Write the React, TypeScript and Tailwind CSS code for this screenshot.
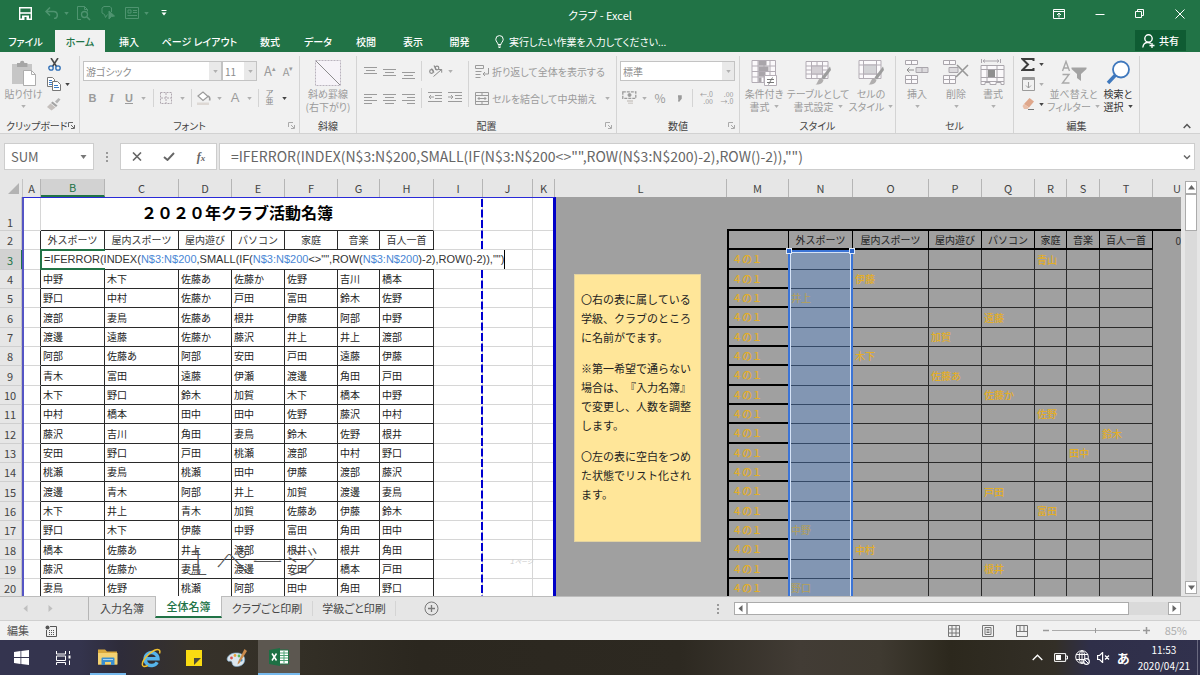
import React from "react";
import type { ReactNode } from "react";

/* ---------- data ---------- */

const CLUBS = ["外スポーツ", "屋内スポーツ", "屋内遊び", "パソコン", "家庭", "音楽", "百人一首"];

const MEMBERS: string[] = [
  "中野 木下 佐藤あ 佐藤か 佐野 吉川 橋本",
  "野口 中村 佐藤か 戸田 富田 鈴木 佐野",
  "渡部 妻鳥 佐藤あ 根井 伊藤 阿部 中野",
  "渡邊 遠藤 佐藤か 藤沢 井上 井上 渡部",
  "阿部 佐藤あ 阿部 安田 戸田 遠藤 伊藤",
  "青木 富田 遠藤 伊瀬 渡邊 角田 戸田",
  "木下 野口 鈴木 加賀 木下 橋本 中野",
  "中村 橋本 田中 田中 佐野 藤沢 中村",
  "藤沢 吉川 角田 妻鳥 鈴木 佐野 根井",
  "安田 野口 戸田 桃瀬 渡部 中村 野口",
  "桃瀬 妻鳥 桃瀬 田中 伊藤 渡部 藤沢",
  "渡邊 青木 阿部 井上 加賀 渡邊 妻鳥",
  "木下 井上 青木 加賀 佐藤あ 伊藤 鈴木",
  "野口 木下 伊藤 中野 富田 角田 田中",
  "橋本 佐藤あ 井上 渡部 根井 根井 角田",
  "藤沢 佐藤か 妻鳥 渡邊 安田 橋本 戸田",
  "妻鳥 佐野 桃瀬 阿部 田中 角田 野口",
];

/* Sheet row -> [club index, student] on the sign-up side. */
const SIGNUPS: Record<number, [number, string]> = {
  3: [4, "青山"],
  4: [1, "伊藤"],
  5: [0, "井上"],
  6: [3, "遠藤"],
  7: [2, "加賀"],
  8: [1, "木下"],
  9: [2, "佐藤あ"],
  10: [3, "佐藤か"],
  11: [4, "佐野"],
  12: [6, "鈴木"],
  13: [5, "田中"],
  15: [3, "戸田"],
  16: [4, "富田"],
  17: [0, "中野"],
  18: [1, "中村"],
  19: [3, "根井"],
  20: [0, "野口"],
};

const COLUMNS: [string, string][] = [
  ["A", "w-[18px]"],
  ["B", "w-[64px]"],
  ["C", "w-[74px]"],
  ["D", "w-[53px]"],
  ["E", "w-[53px]"],
  ["F", "w-[53px]"],
  ["G", "w-[42px]"],
  ["H", "w-[54px]"],
  ["I", "w-[49px]"],
  ["J", "w-[50px]"],
  ["K", "w-[22px]"],
  ["L", "w-[172px]"],
  ["M", "w-[62px]"],
  ["N", "w-[64px]"],
  ["O", "w-[76px]"],
  ["P", "w-[53px]"],
  ["Q", "w-[53px]"],
  ["R", "w-[32px]"],
  ["S", "w-[33px]"],
  ["T", "w-[53px]"],
  ["U", ""],
];

const FORMULA = '=IFERROR(INDEX(N$3:N$200,SMALL(IF(N$3:N$200<>"",ROW(N$3:N$200)-2),ROW()-2)),"")';

/* ---------- small parts ---------- */

function Caret({ dark = false }: { dark?: boolean }) {
  return (
    <svg viewBox="0 0 6 4" className={dark ? "h-[3px] w-[5px] shrink-0 fill-[#444]" : "h-[3px] w-[5px] shrink-0 fill-[#b0b0b0]"} aria-hidden="true">
      <path d="M0 0h6L3 4z" />
    </svg>
  );
}

function Tool({ label, className = "", children }: { label: string; className?: string; children: ReactNode }) {
  return (
    <button type="button" aria-label={label} title={label} className={`flex shrink-0 items-center justify-center ${className}`}>
      {children}
    </button>
  );
}

function Svg({ w, h, children, className = "" }: { w: number; h: number; children: ReactNode; className?: string }) {
  return (
    <svg width={w} height={h} viewBox={`0 0 ${w} ${h}`} fill="none" stroke="currentColor" className={`shrink-0 ${className}`} aria-hidden="true">
      {children}
    </svg>
  );
}

function Rule({ className = "h-5" }: { className?: string }) {
  return <span className={`w-px shrink-0 bg-[#d4d4d4] ${className}`} />;
}

function Group({ label, width, launcher, dark, children }: { label: string; width: string; launcher?: boolean; dark?: boolean; children: ReactNode }) {
  return (
    <section aria-label={label} className={`flex shrink-0 flex-col pt-1 ${width}`}>
      <div className="flex min-h-0 flex-1 border-r border-[#d4d4d4]">{children}</div>
      <div className={`relative flex h-4 items-center border-r border-[#d4d4d4] text-[#444] ${dark ? "pl-[6px]" : "justify-center"}`}>
        {label}
        {launcher && (
          <button type="button" aria-label={`${label}の設定`} className={`absolute right-1 bottom-1 ${dark ? "text-[#666]" : "text-[#aaa]"}`}>
            <Svg w={7} h={7}>
              <path d="M.5 5V.5H5M3 3l3 3M6.5 3v3.500H3" />
            </Svg>
          </button>
        )}
      </div>
    </section>
  );
}

function BigButton({ icon, lines, dark, caretBelow, caretInline, width }: { icon: ReactNode; lines: string[]; dark?: boolean; caretBelow?: boolean; caretInline?: boolean; width: string }) {
  return (
    <button type="button" className={`flex shrink-0 flex-col items-center pt-[2px] ${width} ${dark ? "text-[#333]" : "text-[#9b9b9b]"}`}>
      <span className="flex h-[29px] items-center justify-center">{icon}</span>
      {lines.map((line, i) => (
        <span key={line} className="flex items-center gap-1 leading-[13px] whitespace-nowrap">
          {line}
          {caretInline && i === lines.length - 1 && <Caret dark={dark} />}
        </span>
      ))}
      {caretBelow && (
        <span className="flex h-3 items-center">
          <Caret dark={dark} />
        </span>
      )}
    </button>
  );
}

function Combo({ label, value, width }: { label: string; value: string; width: string }) {
  return (
    <label className={`relative flex h-5 shrink-0 border border-[#c3c3c3] bg-white ${width}`}>
      <select aria-label={label} className="w-full appearance-none bg-transparent pl-[2px] text-[10px] text-[#8c8c8c] outline-none">
        <option>{value}</option>
      </select>
      <span className="pointer-events-none absolute inset-y-0 right-0 flex w-3 items-center justify-center bg-[#e9e9e9]">
        <Caret />
      </span>
    </label>
  );
}

/* ---------- icons ---------- */

const Lines = ({ d }: { d: string }) => (
  <Svg w={13} h={11} className="text-[#9b9b9b]">
    <path d={d} />
  </Svg>
);

const PasteIcon = () => (
  <Svg w={26} h={26}>
    <path d="M1 4h20v20H1z" fill="#c6c6c6" stroke="none" />
    <path d="M6 3h3a2.200 2.200 0 0 1 4.400 0h3v4H6z" fill="#a6a6a6" stroke="none" />
    <path d="M12.500 10.500h8l4 4v11h-12z" fill="#fff" stroke="#adadad" />
    <path d="M20.500 10.500v4h4" stroke="#adadad" />
  </Svg>
);

const CutIcon = () => (
  <Svg w={13} h={13}>
    <path d="M3 0l5.500 8.500M10 0L4.500 8.500" stroke="#4a4a4a" strokeWidth="1.600" />
    <circle cx="3" cy="10" r="2.200" stroke="#2b6cb5" strokeWidth="1.300" />
    <circle cx="10" cy="10" r="2.200" stroke="#2b6cb5" strokeWidth="1.300" />
  </Svg>
);

const CopyIcon = () => (
  <Svg w={14} h={14} className="text-[#777]">
    <path d="M.5.5h5l2 2v7h-7z" fill="#fff" />
    <path d="M2 3.500h3M2 5.500h3M2 7.500h3" stroke="#3b7bc4" />
    <path d="M5.500 4.500h5l3 3v6h-8z" fill="#fff" />
    <path d="M7 8.500h4M7 10.500h5" stroke="#3b7bc4" />
  </Svg>
);

const BrushIcon = () => (
  <Svg w={14} h={13}>
    <path d="M13.500 1.500l-2-1.500-3.500 3.500 2 2z" fill="#b5b5b5" stroke="none" />
    <path d="M5.500 3.500l5 4-1.500 1.500-5-4z" fill="#a3a3a3" stroke="none" />
    <path d="M3.500 5.500l5 4-4 3-4.500-3.500z" fill="#c5c0bd" stroke="none" />
  </Svg>
);

const DiagonalIcon = () => (
  <Svg w={26} h={26}>
    <path d="M.5.5h25v25H.5z" fill="#f6f3f8" stroke="#b9b3bd" strokeDasharray="2 1" />
    <path d="M1 1l24 24" stroke="#8c8c8c" />
  </Svg>
);

const Pen = ({ x }: { x: number }) => (
  <g transform={`translate(${x} 0)`} stroke="none">
    <path d="M15 6.500l-8.500 11 2.500 2L16 10z" fill="#9d9d9d" />
    <path d="M6 18l2.500 2c-1 4-4.500 5-8 4.500 2.500-1 2-5.500 5.500-6.500z" fill="#b0aeae" />
  </g>
);

const ConditionalIcon = () => (
  <Svg w={27} h={26}>
    <path d="M1 .5h23.500v22H1zM1 6h23M1 11.500h23M1 17h23M7 .5v22M13 .5v22M19 .5v22" stroke="#b3adb5" fill="#fbf9fb" />
    <path d="M7.500 1h8v4.500h-8zM7.500 6.500h10v4.500h-10zM7.500 12h7v4.500h-7zM7.500 17.500h3v4.500h-3z" fill="#a9a5aa" stroke="none" />
    <path d="M13.500 15.500h12v10h-12z" fill="#fff" stroke="#b3adb5" />
    <path d="M16 19.500h7M16 22.500h7M21.500 17.500l-4 7" stroke="#777" />
  </Svg>
);

const TableStyleIcon = () => (
  <Svg w={27} h={26}>
    <path d="M1 1.500h22v17H1zM1 6h22M1 10h22M1 14h22M6.500 1.500v17M12 1.500v17M17.500 1.500v17" stroke="#b3adb5" fill="#fbf9fb" />
    <path d="M6.500 6h11v8h-11z" fill="#d3cfd4" stroke="#b3adb5" />
    <Pen x={10} />
  </Svg>
);

const CellStyleIcon = () => (
  <Svg w={27} h={26}>
    <path d="M1 .5h22v18H1zM1 5h22M1 14h22M5.500.5v18M18.500.5v18" stroke="#b3adb5" fill="#fbf9fb" />
    <path d="M5.500 5h13v9h-13z" fill="#d3d3d6" stroke="#b3adb5" />
    <Pen x={10} />
  </Svg>
);

const InsertIcon = () => (
  <Svg w={24} h={25} className="text-[#aaa6ac]">
    <path d="M.5.5h12v4H.5zM6.500.5v4M.5 15.500h12v8H.5zM.5 19.500h12M6.500 15.500v8" fill="#fbf9fb" />
    <path d="M11 7.500h12v5H11zM17 7.500v5" fill="#dcdadd" />
    <path d="M9 10H2M4.500 7.500L2 10l2.500 2.500" stroke="#8c8c8c" />
  </Svg>
);

const DeleteIcon = () => (
  <Svg w={27} h={25} className="text-[#aaa6ac]">
    <path d="M.5.5h12v4H.5zM6.500.5v4M.5 15.500h12v8H.5zM.5 19.500h12M6.500 15.500v8" fill="#fbf9fb" />
    <path d="M6 7.500h9v5H6z" fill="#dcdadd" />
    <path d="M14 5l11 11M25 5L13 17" stroke="#979797" strokeWidth="1.600" />
  </Svg>
);

const FormatIcon = () => (
  <Svg w={26} h={27} className="text-[#aaa6ac]">
    <path d="M1.500 0v4M20.500 0v4M3 2h16M5 .5L3 2l2 1.500M17 .5L19 2l-2 1.500" />
    <path d="M1 6.500h23v16H1zM1 10.500h23M1 18.500h23M7 6.500v16M17 6.500v16M1 22.500v3h4v-2h5v2h6v-2h5v2h3v-3" fill="#fbf9fb" />
    <path d="M8 11h7v7H8z" fill="#8f8f8f" stroke="none" />
  </Svg>
);

const SortIcon = () => (
  <Svg w={26} h={26}>
    <path d="M1.500 11L5 1.500 8.500 11M2.700 8h4.600M1.500 14.500h6.500l-6.500 8.500h7" stroke="#a9a9a9" strokeWidth="1.400" />
    <path d="M10.500 7.500h15v1.500L20 14v7l-4-3v-4l-5.500-5z" fill="#a3a3a3" stroke="none" />
  </Svg>
);

const FindIcon = () => (
  <Svg w={25} h={26}>
    <path d="M10 14.500L2 23" stroke="#3f78bd" strokeWidth="3.500" />
    <circle cx="15" cy="9.500" r="8" stroke="#3f78bd" strokeWidth="1.800" fill="#fff" />
  </Svg>
);

/* ---------- application chrome ---------- */

function TitleBar() {
  return (
    <div className="grid h-[30px] grid-cols-[1fr_auto_1fr] items-center">
      <div className="flex items-center pb-1 pl-[19px]">
        <Tool label="上書き保存" className="w-[13px] text-white">
          <Svg w={13} h={13}>
            <path d="M.7.7h11.600v11.600H.7z" strokeWidth="1.400" />
            <path d="M1 6h11" strokeWidth="1.600" />
            <path d="M3 8.500h7V13H3z" fill="currentColor" stroke="none" />
            <path d="M5.500 10h2v3h-2z" fill="#217346" stroke="none" />
          </Svg>
        </Tool>
        <Tool label="元に戻す" className="ml-[13px] gap-[5px] text-[#4f9470]">
          <Svg w={14} h={12}>
            <path d="M5 .5L1 4.500l4 4M1 4.500h7.500c5 0 5 7 .5 7" strokeWidth="1.500" />
          </Svg>
          <svg viewBox="0 0 6 4" className="h-[3px] w-[5px] fill-[#4f9470]"><path d="M0 0h6L3 4z" /></svg>
        </Tool>
        <Tool label="印刷プレビュー" className="ml-2 text-[#4f9470]">
          <Svg w={14} h={15}>
            <path d="M4 13.500H.5V.5h7l3 3v2M7.500.5v3h3" />
            <circle cx="7.500" cy="8.500" r="3" strokeWidth="1.300" />
            <path d="M10 11l3 3" strokeWidth="1.600" />
          </Svg>
        </Tool>
        <Tool label="図形" className="ml-[10px] text-[#4f9470]">
          <Svg w={14} h={14}>
            <path d="M3.500 8.500L1 7V2l2-1.500h6L10.500 2v4M3.500 8.500l1 3 2-3" />
            <path d="M8 5l5.500 5-3 .5L8 13z" fill="currentColor" />
          </Svg>
        </Tool>
        <Tool label="フォーム" className="ml-[10px] gap-[5px] text-[#4f9470]">
          <Svg w={14} h={12}>
            <path d="M.5.5h13v11H.5zM3 3h3v3H3zM8 3.500h4M8 5.500h4M2.500 8.500H12" />
          </Svg>
          <svg viewBox="0 0 6 4" className="h-[3px] w-[5px] fill-[#4f9470]"><path d="M0 0h6L3 4z" /></svg>
        </Tool>
        <Tool label="クイック アクセス ツール バーのユーザー設定" className="ml-3 text-white">
          <Svg w={6} h={6}>
            <path d="M.5.5h5" />
            <path d="M.5 2.500h5L3 5.500z" fill="currentColor" stroke="none" />
          </Svg>
        </Tool>
      </div>
      <h1 className="text-[11px] text-white">クラブ - Excel</h1>
      <div className="flex items-center justify-end gap-[30px] pr-[15px] pb-[3px] text-white">
        <Tool label="リボンの表示オプション">
          <Svg w={12} h={10}>
            <path d="M.5.5h11v9H.5zM.5 2.500h11M6 8.500V4M4 6l2-2 2 2" />
          </Svg>
        </Tool>
        <Tool label="最小化">
          <Svg w={10} h={10}>
            <path d="M.5 5.500h9" />
          </Svg>
        </Tool>
        <Tool label="元のサイズに戻す">
          <Svg w={10} h={10}>
            <path d="M.5 2.500h6v6h-6zM2.500 2.500v-2h6v6h-2" />
          </Svg>
        </Tool>
        <Tool label="閉じる">
          <Svg w={10} h={10}>
            <path d="M.5.5l9 9M9.500.5l-9 9" />
          </Svg>
        </Tool>
      </div>
    </div>
  );
}

const TABS: [string, string][] = [
  ["挿入", "w-[48px]"],
  ["ページ レイアウト", "w-[93px]"],
  ["数式", "w-[48px]"],
  ["データ", "w-[48px]"],
  ["校閲", "w-[48px]"],
  ["表示", "w-[46px]"],
  ["開発", "w-[47px]"],
];

function RibbonTabs() {
  return (
    <nav className="flex h-[22px] items-stretch text-[10px] font-medium whitespace-nowrap text-white">
      <button type="button" className="w-[55px] pr-1">ファイル</button>
      <button type="button" className="w-[50px] bg-[#f1f1f1] text-[#217346]">ホーム</button>
      {TABS.map(([name, width]) => (
        <button key={name} type="button" className={width}>{name}</button>
      ))}
      <label className="ml-3 flex items-center gap-[5px]">
        <Svg w={9} h={13}>
          <path d="M3 9.500C3 7.500.8 6.800.8 4.300a3.700 3.700 0 0 1 7.400 0C8.200 6.800 6 7.500 6 9.500zM3 11h3M3.500 12.500h2" />
        </Svg>
        <input aria-label="操作アシスト" placeholder="実行したい作業を入力してください..." className="w-44 bg-transparent text-[10px] font-normal text-white outline-none placeholder:text-white" />
      </label>
      <button type="button" className="mr-[14px] mb-px ml-auto flex w-[51px] items-center justify-center gap-1 bg-[#0f5c33]">
        <Svg w={13} h={14}>
          <circle cx="6.500" cy="4.500" r="3.700" strokeWidth="1.400" />
          <path d="M.8 13.500c.4-3.500 2.500-5 5-5 1.500 0 2.500.5 3 1.200M7.500 11.500h5M10 9v5" strokeWidth="1.300" />
        </Svg>
        共有
      </button>
    </nav>
  );
}

function Ribbon() {
  return (
    <div className="flex h-[82px] shrink-0 border-b border-[#d2d2d2] bg-[#f1f1f1] text-[10px] text-[#9b9b9b]">
      <Group label="クリップボード" width="w-[80px]" launcher dark>
        <BigButton icon={<PasteIcon />} lines={["貼り付け"]} caretBelow width="w-[47px]" />
        <div className="flex flex-col gap-[6px] pt-px">
          <Tool label="切り取り" className="h-[14px] w-[14px]"><CutIcon /></Tool>
          <Tool label="コピー" className="h-[14px] gap-1"><CopyIcon /><Caret dark /></Tool>
          <Tool label="書式のコピー/貼り付け" className="h-[14px] w-[14px]"><BrushIcon /></Tool>
        </div>
      </Group>

      <Group label="フォント" width="w-[220px]" launcher>
        <div className="flex flex-col gap-2 pt-[5px] pl-[3px]">
          <div className="flex items-center">
            <Combo label="フォント名" value="游ゴシック" width="w-[139px]" />
            <Combo label="フォント サイズ" value="11" width="w-[35px]" />
            <Tool label="フォント サイズの拡大" className="ml-1 w-[18px] text-[13px]">A<sup className="text-[7px]">▴</sup></Tool>
            <Tool label="フォント サイズの縮小" className="w-[18px] text-[11px]">A<sup className="text-[7px]">▾</sup></Tool>
          </div>
          <div className="flex h-[18px] items-center font-['Liberation_Sans','Noto_Sans_CJK_JP',sans-serif]">
            <Tool label="太字" className="w-[19px] text-[11px] font-bold">B</Tool>
            <Tool label="斜体" className="w-[19px] font-['Liberation_Serif',serif] text-[12px] font-bold italic">I</Tool>
            <Tool label="下線" className="w-[28px] justify-start gap-2 pl-1 text-[11px] font-bold"><span className="underline">U</span><Caret /></Tool>
            <Rule className="ml-1 h-[18px]" />
            <Tool label="罫線" className="w-[37px] gap-2">
              <Svg w={12} h={12}>
                <path d="M.5.5h11v11H.5zM6 1v10M1 6h10" stroke="#b0a8b0" strokeDasharray="2 1" />
              </Svg>
              <Caret />
            </Tool>
            <Rule className="h-[18px]" />
            <Tool label="塗りつぶしの色" className="w-[34px] gap-[6px]">
              <Svg w={15} h={14}>
                <path d="M2 5l5-4 5 4.500-5 4z" fill="#fff" strokeWidth="1.200" />
                <path d="M12 5c2 1 2 3 1.500 4.500" strokeWidth="1.600" />
                <path d="M1 11.500h12V14H1z" fill="#ddd8d4" stroke="none" />
              </Svg>
              <Caret />
            </Tool>
            <Tool label="フォントの色" className="w-[31px] gap-2 text-[13px]">A<Caret /></Tool>
            <Rule className="ml-px h-[18px]" />
            <Tool label="ふりがなの表示/非表示" className="w-[34px] gap-2">
              <span className="flex flex-col text-center text-[8px] leading-[8px] text-[#888]"><span>ア</span><span>亜</span></span>
              <Caret dark />
            </Tool>
          </div>
        </div>
      </Group>

      <Group label="斜線" width="w-[57px]">
        <BigButton icon={<DiagonalIcon />} lines={["斜め罫線", "(右下がり)"]} width="w-[56px]" />
      </Group>

      <Group label="配置" width="w-[260px]" launcher>
        <div className="flex pt-[5px] pl-[7px]">
          <div className="flex flex-col gap-2">
            <div className="flex h-5 items-center gap-[6px]">
              <Tool label="上揃え"><Lines d="M0 1.500h13M2 4.500h9M0 7.500h13" /></Tool>
              <Tool label="上下中央揃え"><Lines d="M0 3.500h13M2 6.500h9M0 9.500h13" /></Tool>
              <Tool label="下揃え" className="pt-1"><Lines d="M0 4.500h13M2 7.500h9M0 10.500h13" /></Tool>
              <Rule />
              <Tool label="方向" className="gap-[5px]">
                <Svg w={15} h={14} className="text-[#8c8c8c]">
                  <circle cx="3.500" cy="7.500" r="1.800" strokeWidth="1.200" />
                  <path d="M3.500 4.500L6 8.500M6 1.500l2.500 4.500" strokeWidth="1.200" />
                  <circle cx="9" cy="4" r="1.800" strokeWidth="1.200" />
                  <path d="M5.500 12.500l8-7M10.500 5.500h3.200v3.200" />
                </Svg>
                <Caret />
              </Tool>
            </div>
            <div className="flex h-[18px] items-center gap-[6px]">
              <Tool label="左揃え"><Lines d="M0 1.500h13M0 4.500h8M0 7.500h13M0 10.500h8" /></Tool>
              <Tool label="中央揃え"><Lines d="M0 1.500h13M2 4.500h9M0 7.500h13M2 10.500h9" /></Tool>
              <Tool label="右揃え"><Lines d="M0 1.500h13M5 4.500h8M0 7.500h13M5 10.500h8" /></Tool>
              <Rule />
              <Tool label="インデントを減らす">
                <Svg w={14} h={12}><path d="M0 .5h14M7 3.500h7M7 6.500h7M0 9.500h14M6 5H1M3 3L1 5l2 2" /></Svg>
              </Tool>
              <Tool label="インデントを増やす">
                <Svg w={14} h={12}><path d="M0 .5h14M7 3.500h7M7 6.500h7M0 9.500h14M0 5h5M3 3l2 2-2 2" /></Svg>
              </Tool>
            </div>
          </div>
          <Rule className="ml-[6px] h-[46px]" />
          <div className="flex flex-col gap-2 pl-[6px]">
            <button type="button" className="flex h-5 items-center gap-[3px] whitespace-nowrap">
              <Svg w={14} h={13}><path d="M.5.5h8v3h-8zM.5 6.500h6M.5 9.500h5M.5 12.500h5M13.500 3v6H8M10 7L8 9l2 2" /></Svg>
              折り返して全体を表示する
            </button>
            <button type="button" className="flex h-[18px] items-center gap-[3px] whitespace-nowrap">
              <Svg w={14} h={13}><path d="M.5.5h13v12H.5zM.5 3.500h13M.5 9.500h13M7 .5v3M7 9.500v3M3 6.500h8M4.500 5L3 6.500 4.500 8M9.500 5L11 6.500 9.500 8" /></Svg>
              セルを結合して中央揃え
              <span className="pl-[5px]"><Caret /></span>
            </button>
          </div>
        </div>
      </Group>

      <Group label="数値" width="w-[123px]" launcher>
        <div className="flex flex-col gap-2 pt-[5px] pl-[3px]">
          <Combo label="表示形式" value="標準" width="w-[115px]" />
          <div className="flex h-[18px] items-center">
            <Tool label="通貨表示形式" className="w-[28px] gap-[5px]">
              <Svg w={15} h={14}>
                <path d="M.8.8h13v6.500H.8z" strokeDasharray="3 1" strokeWidth="1.300" />
                <circle cx="7.500" cy="4" r="1.500" fill="currentColor" />
                <path d="M5 9h6v2H5zM6 11.500h5V13H6z" fill="#d5d2cf" stroke="none" />
              </Svg>
              <Caret />
            </Tool>
            <Tool label="パーセント スタイル" className="w-[24px] text-[12px]">%</Tool>
            <Tool label="桁区切りスタイル" className="w-[15px] text-[14px] font-bold">
              <Svg w={5} h={7}><path d="M1 1h3v2.500L1.500 6.500" strokeWidth="1.500" fill="currentColor" /></Svg>
            </Tool>
            <Rule className="ml-[5px] h-[18px]" />
            <Tool label="小数点以下の表示桁数を増やす" className="w-[27px]">
              <span className="flex flex-col text-right text-[7px] leading-[7px]"><span>←.0</span><span>.00</span></span>
            </Tool>
            <Tool label="小数点以下の表示桁数を減らす" className="w-[14px]">
              <span className="flex flex-col text-right text-[7px] leading-[7px]"><span>.00</span><span>→.0</span></span>
            </Tool>
          </div>
        </div>
      </Group>

      <Group label="スタイル" width="w-[156px]">
        <BigButton icon={<ConditionalIcon />} lines={["条件付き", "書式"]} caretInline width="w-[48px]" />
        <BigButton icon={<TableStyleIcon />} lines={["テーブルとして", "書式設定"]} caretInline width="w-[60px]" />
        <BigButton icon={<CellStyleIcon />} lines={["セルの", "スタイル"]} caretInline width="w-[46px]" />
      </Group>

      <Group label="セル" width="w-[118px]">
        <BigButton icon={<InsertIcon />} lines={["挿入"]} caretBelow width="w-[42px]" />
        <BigButton icon={<DeleteIcon />} lines={["削除"]} caretBelow width="w-[36px]" />
        <BigButton icon={<FormatIcon />} lines={["書式"]} caretBelow width="w-[38px]" />
      </Group>

      <Group label="編集" width="w-[126px]">
        <div className="flex flex-col gap-[6px] pt-px pl-[7px]">
          <Tool label="オート SUM" className="h-[14px] gap-1">
            <Svg w={14} h={13}>
              <path d="M12.500 3V1H1.500l5.500 5.500L1.500 12h11v-2" stroke="#3d3d3d" strokeWidth="2" />
            </Svg>
            <Caret dark />
          </Tool>
          <Tool label="フィル" className="h-[14px] gap-1">
            <Svg w={13} h={14}>
              <path d="M.5.5h12v13H.5z" />
              <path d="M.5 1.500h12M.5 2.500h12M6.500 5v6M4 8.500l2.500 2.500L9 8.500" />
            </Svg>
            <Caret />
          </Tool>
          <Tool label="クリア" className="h-[14px] gap-1">
            <Svg w={13} h={12}>
              <path d="M7.500 0l4.500 3.500-5 6L2 6z" fill="#dfa78b" stroke="none" />
              <path d="M2 6l5 3.500-1.500 1.500H2L.5 8z" fill="#e9bfa9" stroke="none" />
              <path d="M6 11.500h6" stroke="#777" />
            </Svg>
            <Caret dark />
          </Tool>
        </div>
        <BigButton icon={<SortIcon />} lines={["並べ替えと", "フィルター"]} caretInline width="w-[59px]" />
        <BigButton icon={<FindIcon />} lines={["検索と", "選択"]} caretInline dark width="w-[30px]" />
      </Group>

      <button type="button" aria-label="リボンを折りたたむ" className="mr-[9px] mb-1 ml-auto self-end text-[#555]">
        <Svg w={8} h={6}><path d="M.7 5L4 1.500 7.300 5" strokeWidth="1.500" /></Svg>
      </button>
    </div>
  );
}

function FormulaBar() {
  return (
    <div className="flex h-[45px] shrink-0 items-start bg-[#e6e6e6] pt-[9px] pr-[5px] pl-1 text-[#666]">
      <label className="flex h-[27px] w-[90px] items-center border border-[#cdcdcd] bg-white pr-[6px] pl-[6px]">
        <input aria-label="名前ボックス" defaultValue="SUM" className="w-0 flex-1 bg-transparent text-[13px] outline-none" />
        <svg viewBox="0 0 6 4" className="h-1 w-[7px] fill-[#777]"><path d="M0 0h6L3 4z" /></svg>
      </label>
      <span className="flex h-[27px] w-[26px] items-center justify-center text-[#999]">
        <Svg w={2} h={10}><path d="M1 0v2M1 4v2M1 8v2" strokeWidth="2" /></Svg>
      </span>
      <div className="flex h-[27px] w-[97px] items-center justify-around border border-[#cdcdcd] bg-white">
        <Tool label="キャンセル"><Svg w={10} h={9}><path d="M1 .5l8 8M9 .5l-8 8" strokeWidth="1.600" /></Svg></Tool>
        <Tool label="入力"><Svg w={12} h={9}><path d="M1 5l3.500 3L11 1" strokeWidth="1.900" /></Svg></Tool>
        <Tool label="関数の挿入"><span className="font-['Liberation_Serif',serif] text-[12px] font-bold italic">f<span className="text-[9px]">x</span></span></Tool>
      </div>
      <label className="ml-[2px] flex h-[27px] flex-1 items-center border border-[#cdcdcd] bg-white pr-[3px] pl-[11px]">
        <input aria-label="数式バー" defaultValue={FORMULA} className="w-0 flex-1 bg-transparent text-[14px] outline-none" />
        <Svg w={8} h={6}><path d="M1 1.500L4 4.500l3-3" strokeWidth="1.500" /></Svg>
      </label>
    </div>
  );
}

/* ---------- worksheet ---------- */

const THIN = "border-r border-b border-[#2a2a2a]";
const FAINT = "border-r border-b border-[#d6d6d6] bg-white";

function rowHeight(row: number) {
  if (row === 1) return "h-[34px]";
  return row % 3 === 0 ? "h-5" : "h-[19px]";
}

function RowHeader({ row }: { row: number }) {
  const active = row === 3;
  return (
    <th
      scope="row"
      className={`border-r-2 border-b border-b-[#cfcfcf] p-0 pr-px text-center text-[11px] leading-4 font-normal ${
        row === 1 ? "align-bottom" : ""
      } ${active ? "border-r-[#217346] bg-[#d2d2d2] text-[#217346]" : "border-r-[#c4c4c4] bg-[#e6e6e6] text-[#444]"}`}
    >
      {row}
    </th>
  );
}

function CellEditor() {
  return (
    <div className="absolute top-0 left-0 z-10 flex h-[19px] items-center border-r border-black bg-white pl-[3px] font-['Liberation_Sans','Noto_Sans_CJK_JP',sans-serif] text-[11px] leading-none whitespace-nowrap text-[#333]">
      <span>
        =IFERROR(INDEX(<span className="text-[#4a86d4]">N$3:N$200</span>,SMALL(IF(<span className="text-[#4a86d4]">N$3:N$200</span>
        &lt;&gt;"",ROW(<span className="text-[#4a86d4]">N$3:N$200</span>)-2),ROW()-2)),"")
      </span>
      <span className="absolute -top-px -left-px h-[21px] w-[65px] border-2 border-r-0 border-[#217346]" />
    </div>
  );
}

function LeftCells({ row }: { row: number }) {
  if (row === 1) {
    return (
      <td colSpan={7} className="border-r border-b border-r-[#d6d6d6] border-b-[#2a2a2a] bg-white p-0 pb-[3px] text-center text-[16px] leading-5 font-bold text-black">
        ２０２０年クラブ活動名簿
      </td>
    );
  }
  if (row === 2) {
    return (
      <>
        {CLUBS.map((club) => (
          <td key={club} className={`${THIN} bg-white p-0 text-center leading-4 text-[#333]`}>{club}</td>
        ))}
      </>
    );
  }
  if (row === 3) {
    return (
      <>
        {CLUBS.map((club, i) => (
          <td key={club} className={`${THIN} relative bg-white p-0 leading-4`}>{i === 0 && <CellEditor />}</td>
        ))}
      </>
    );
  }
  return (
    <>
      {MEMBERS[row - 4].split(" ").map((name, i) => (
        <td key={CLUBS[i]} className={`${THIN} bg-white p-0 pl-[2px] leading-4 text-[#222]`}>{name}</td>
      ))}
    </>
  );
}

function RightCells({ row }: { row: number }) {
  if (row === 1) {
    return (
      <>
        <td colSpan={8} className="border-b-2 border-black p-0" />
        <td className="border-b-2 border-black p-0" />
      </>
    );
  }
  const entry = SIGNUPS[row];
  return (
    <>
      <td className="border-r border-b-2 border-l-2 border-black p-0 pl-[3px] leading-4 font-medium text-[#e3ae28]">{row > 2 && "４の１"}</td>
      {CLUBS.map((club, i) => (
        <td
          key={club}
          className={
            row === 2
              ? "border-r border-b-2 border-black p-0 text-center leading-4 text-[#222]"
              : `${THIN} p-0 pl-[2px] leading-4 font-medium text-[#e3ae28]`
          }
        >
          {row === 2 ? club : entry && entry[0] === i ? entry[1] : null}
        </td>
      ))}
      <td className="p-0 text-right leading-4 text-[#333]">{row === 2 && "0"}</td>
    </>
  );
}

function Note() {
  return (
    <aside className="absolute top-[95px] left-[574px] flex h-[268px] w-[127px] flex-col gap-3 border border-[#e3d3a0] bg-[#ffe699] px-[6px] pt-[15px] text-[11px] leading-[19px] text-[#222] [text-spacing-trim:space-all]">
      <p>〇右の表に属している<br />学級、クラブのところ<br />に名前がでます。</p>
      <p>※第一希望で通らない<br />場合は、『入力名簿』<br />で変更し、人数を調整<br />します。</p>
      <p>〇左の表に空白をつめ<br />た状態でリスト化され<br />ます。</p>
    </aside>
  );
}

function Worksheet() {
  const rows = Array.from({ length: 20 }, (_, i) => i + 1);
  return (
    <div className="relative min-w-0 flex-1 overflow-hidden bg-[#a0a0a0]">
      <table className="w-full table-fixed border-separate border-spacing-0 text-[10px] whitespace-nowrap">
        <colgroup>
          <col className="w-[23px]" />
          {COLUMNS.map(([name, width]) => (
            <col key={name} className={width} />
          ))}
        </colgroup>
        <thead>
          <tr className="h-[18px] bg-[#e6e6e6] text-[11px] text-[#444]">
            <th className="border-r border-[#c4c4c4] p-0">
              <svg viewBox="0 0 11 11" className="ml-auto h-[11px] w-[14px] pr-[3px]" aria-label="すべて選択"><path d="M11 0v11H0z" fill="#b3b3b3" /></svg>
            </th>
            {COLUMNS.map(([name]) => (
              <th
                key={name}
                scope="col"
                className={
                  name === "B"
                    ? "border-r border-b-2 border-r-[#b5b5b5] border-b-[#217346] bg-[#d2d2d2] p-0 leading-4 font-normal text-[#217346]"
                    : name === "U"
                      ? "p-0 text-right leading-4 font-normal"
                      : "border-r border-[#b5b5b5] p-0 leading-4 font-normal"
                }
              >
                {name}
              </th>
            ))}
          </tr>
        </thead>
        <tbody>
          {rows.map((row) => (
            <tr key={row} className={rowHeight(row)}>
              <RowHeader row={row} />
              <td className={`border-b border-b-[#d6d6d6] bg-white p-0 ${row === 1 ? "border-r border-r-[#d6d6d6]" : "border-r border-r-[#2a2a2a]"}`} />
              <LeftCells row={row} />
              <td className={FAINT} />
              <td className={FAINT} />
              <td className={FAINT} />
              <td className="p-0" />
              <RightCells row={row} />
            </tr>
          ))}
        </tbody>
      </table>

      {/* print area, page break and page watermark */}
      <div className="pointer-events-none absolute top-[18px] left-[22px] h-[600px] w-[534px] border-t border-r-[3px] border-l-2 border-t-[#2a2ad8] border-r-[#0000c8] border-l-[#5555c4]" />
      <svg className="pointer-events-none absolute top-5 left-[481px] h-[600px] w-[2px]" aria-hidden="true">
        <path d="M1 0v52M1 71v529" stroke="#0000d0" strokeWidth="2" strokeDasharray="8 2.500" />
      </svg>
      <p className="pointer-events-none absolute top-[356px] left-[180px] text-[35px] leading-[50px] font-thin text-[#555]">１ページ</p>
      <p className="pointer-events-none absolute top-[379px] left-[509px] text-[6px] leading-[8px] text-[#c8c8c8] italic">１ページ</p>

      {/* range referenced by the formula */}
      <div className="pointer-events-none absolute top-[71px] left-[788px] h-[600px] w-[65px] border-2 border-[#3b74d6] bg-[#4a84d8]/35 shadow-[inset_0_0_0_1px_#d5e2f5]">
        <span className="absolute -top-1 -left-1 size-[6px] border border-[#dfe9f7] bg-[#2f68cc]" />
        <span className="absolute -top-1 -right-1 size-[6px] border border-[#dfe9f7] bg-[#2f68cc]" />
      </div>
      <Note />
    </div>
  );
}

function Arrow({ dir }: { dir: "up" | "down" | "left" | "right" }) {
  const d = { up: "M0 5.500L3.500 1 7 5.500z", down: "M0 1.500L3.500 6 7 1.500z", left: "M5.500 0L1.500 3.500 5.500 7z", right: "M1.500 0L5.500 3.500 1.500 7z" }[dir];
  return (
    <svg viewBox="0 0 7 7" className="size-[7px] fill-[#666]" aria-hidden="true">
      <path d={d} />
    </svg>
  );
}

function VerticalScroll() {
  return (
    <div className="flex w-[19px] shrink-0 flex-col bg-[#e6e6e6] pt-[2px] pr-[3px] pb-[2px] pl-[4px]">
      <Tool label="上へスクロール" className="h-[13px] w-full border border-[#ababab] bg-white"><Arrow dir="up" /></Tool>
      <div className="flex-1 bg-[#dadada]"><div className="h-[37px] border border-[#ababab] bg-white" /></div>
      <Tool label="下へスクロール" className="h-[13px] w-full border border-[#ababab] bg-white"><Arrow dir="down" /></Tool>
    </div>
  );
}

function SheetTabs() {
  return (
    <div className="flex h-[24px] shrink-0 items-stretch border-t border-[#bcbcbc] bg-[#e6e6e6] text-[11px] whitespace-nowrap text-[#444]">
      <div className="flex w-[89px] items-center gap-[18px] border-r border-[#b0b0b0] pl-[22px] opacity-90">
        <Tool label="前のシート"><svg viewBox="0 0 7 7" className="size-[7px] fill-[#bbb]"><path d="M5.500 0L1.500 3.500 5.500 7z" /></svg></Tool>
        <Tool label="次のシート"><svg viewBox="0 0 7 7" className="size-[7px] fill-[#bbb]"><path d="M1.500 0L5.500 3.500 1.500 7z" /></svg></Tool>
      </div>
      <button type="button" className="w-[66px]">入力名簿</button>
      <button type="button" className="-mt-px mb-[2px] w-[67px] border-x border-b-2 border-x-[#bcbcbc] border-b-[#217346] bg-white font-medium text-[#217346]">全体名簿</button>
      <button type="button" className="w-[90px]">クラブごと印刷</button>
      <Rule className="my-1 bg-[#b0b0b0]" />
      <button type="button" className="w-[82px]">学級ごと印刷</button>
      <Rule className="my-1 bg-[#b0b0b0]" />
      <Tool label="新しいシート" className="ml-[28px] text-[#777]">
        <Svg w={15} h={15}><circle cx="7.500" cy="7.500" r="6.500" /><path d="M4 7.500h7M7.500 4v7" strokeWidth="1.300" /></Svg>
      </Tool>
      <div className="mr-[19px] ml-auto flex w-[464px] items-center">
        <span className="w-[17px] text-[#999]"><Svg w={2} h={10}><path d="M1 0v2M1 4v2M1 8v2" strokeWidth="2" /></Svg></span>
        <Tool label="左へスクロール" className="h-[13px] w-[13px] border border-[#ababab] bg-white"><Arrow dir="left" /></Tool>
        <div className="flex h-[13px] flex-1 bg-[#dadada]"><div className="w-[382px] border border-[#ababab] bg-white" /></div>
        <Tool label="右へスクロール" className="h-[13px] w-[13px] border border-[#ababab] bg-white"><Arrow dir="right" /></Tool>
      </div>
    </div>
  );
}

function StatusBar() {
  return (
    <div className="flex h-5 shrink-0 items-center border-t border-[#d0d0d0] bg-[#f1f1f1] pr-[13px] pl-[7px] text-[11px] text-[#555]">
      <span>編集</span>
      <Tool label="マクロの記録" className="ml-4">
        <Svg w={12} h={12}>
          <path d="M5 1.500h6.500v10H1.500V5" />
          <circle cx="2.500" cy="2.500" r="2" fill="currentColor" stroke="none" />
          <path d="M4 5.500h6M4 7.500h6M4 9.500h6" strokeDasharray="1 1" />
        </Svg>
      </Tool>
      <div className="ml-auto flex items-center gap-[22px] text-[#777]">
        <Tool label="標準"><Svg w={12} h={12}><path d="M.5.5h11v11H.5zM.5 4h11M.5 8h11M4 .5v11M8 .5v11" /></Svg></Tool>
        <Tool label="ページ レイアウト表示"><Svg w={12} h={12}><path d="M.5.5h11v11H.5zM3 2.500h6v7H3zM4.500 4.500h3M4.500 6h3M4.500 7.500h3" /></Svg></Tool>
        <Tool label="改ページ プレビュー"><Svg w={12} h={12}><path d="M.5.5h11v11H.5zM.5 6.500h11M4 .5v6M8 .5v6" /></Svg></Tool>
      </div>
      <Tool label="縮小" className="ml-[15px] text-[#999]"><Svg w={6} h={7}><path d="M0 3.500h6" strokeWidth="1.500" /></Svg></Tool>
      <input
        type="range"
        aria-label="ズーム"
        defaultValue={50}
        className="mx-[3px] h-px w-[88px] appearance-none bg-[#ababab] [&::-webkit-slider-thumb]:h-[5px] [&::-webkit-slider-thumb]:w-px [&::-webkit-slider-thumb]:appearance-none [&::-webkit-slider-thumb]:bg-[#999]"
      />
      <Tool label="拡大" className="text-[#999]"><Svg w={7} h={7}><path d="M0 3.500h7M3.500 0v7" strokeWidth="1.500" /></Svg></Tool>
      <span className="ml-[15px] text-[#b0b0b0]">85%</span>
    </div>
  );
}

/* ---------- desktop taskbar ---------- */

function Taskbar() {
  return (
    <footer className="flex h-[35px] shrink-0 items-stretch bg-[linear-gradient(90deg,#34344f_0,#34344d_80px,#2e2c3a_120px,#37322a_190px,#332f26_300px,#2b271f_420px,#2d2921_680px,#423c35_800px,#3f3a31_880px,#2c281d_950px,#332f27_1055px,#2f2f49_1090px,#31314d_100%)] text-white">
      <Tool label="スタート" className="w-[42px]">
        <svg viewBox="0 0 15 15" className="size-[15px] fill-white"><path d="M0 2l6.500-1v6H0zM7.300.9L15 0v7H7.300zM0 8h6.500v6L0 13zM7.300 8H15v7l-7.700-.9z" /></svg>
      </Tool>
      <Tool label="タスク ビュー" className="w-[42px]">
        <Svg w={15} h={14}><path d="M.5 0v3h9V0M.5 5h9v4.500h-9zM.5 14v-2.500h9V14M13.500 0v3M13.500 9.500V14" /><path d="M12.500 4.500h2v3h-2z" fill="currentColor" stroke="none" /></Svg>
      </Tool>
      <Tool label="エクスプローラー" className="mx-[6px] w-9 border-b-2 border-[#76b9ed]">
        <svg viewBox="0 0 20 17" className="h-[17px] w-5">
          <path d="M0 1.500h7l2 2h10v13H0z" fill="#d9a93d" />
          <path d="M0 5h19.500v11.500H0z" fill="#f4d272" />
          <path d="M3.500 17V10.500q0-1 1-1h11q1 0 1 1V17h-3.500v-3h-6v3z" fill="#3b8fd0" />
          <path d="M5 11.500h10" stroke="#a8d5f2" />
        </svg>
      </Tool>
      <Tool label="Internet Explorer" className="-ml-1 w-[46px]">
        <svg viewBox="0 0 20 20" className="size-5" fill="none">
          <path d="M16.200 14.200A6.500 6.500 0 1 1 17 10.800H5" stroke="#56b4ea" strokeWidth="3.400" />
          <path d="M18.500 5.500C19.800 2 17.500.3 13.500 2.200 7.500 5 1.500 12 1.300 16.200c0 3 2.500 2.800 5.500 1.300" stroke="#f2c230" strokeWidth="1.500" />
        </svg>
      </Tool>
      <Tool label="付箋" className="w-10">
        <svg viewBox="0 0 16 16" className="size-4"><path d="M0 0h16v16H0z" fill="#fadc12" /><path d="M8 8h7l-7 7z" fill="#4b4a3a" /></svg>
      </Tool>
      <Tool label="ペイント" className="ml-[3px] w-10">
        <svg viewBox="0 0 22 20" className="h-5 w-[22px]">
          <path d="M9 5C3 5.500 0 10 1.500 12.500c1 1.700 3 0 4 1s0 5 5 5c6 0 9-4 8-8.500C17.500 6.500 14 4.500 9 5z" fill="#dbe6ee" stroke="#7da6c4" strokeWidth=".7" />
          <circle cx="5.500" cy="10" r="1.400" fill="#d9534f" />
          <circle cx="9" cy="7.500" r="1.400" fill="#e9a23b" />
          <circle cx="13" cy="8" r="1.400" fill="#5cb85c" />
          <circle cx="15" cy="12" r="1.600" fill="#3b8fd0" />
          <path d="M18.500 1l2.500 2-7.500 12-2 1.500.5-2.500z" fill="#c98a4b" />
        </svg>
      </Tool>
      <Tool label="Excel" className="ml-px w-[42px] border-b-2 border-[#76b9ed] bg-[#5c5750]">
        <svg viewBox="0 0 20 18" className="h-[18px] w-5">
          <path d="M10 2h9.500v14H10z" fill="#fff" stroke="#217346" />
          <path d="M11 5h8M11 7.500h8M11 10h8M11 12.500h8M15 3v12" stroke="#4fa376" />
          <path d="M0 2l11-2v18L0 16z" fill="#1d7044" />
          <path d="M3 5.500l4.500 7M7.500 5.500L3 12.500" stroke="#fff" strokeWidth="1.500" />
        </svg>
      </Tool>
      <div className="ml-auto flex items-center gap-[7px]">
        <Tool label="隠れているインジケーター" className="mr-1"><Svg w={11} h={7}><path d="M.7 6L5.500 1.200 10.300 6" strokeWidth="1.300" /></Svg></Tool>
        <Tool label="バッテリー"><Svg w={14} h={9}><path d="M.6.6h11v7.800H.6zM12 3h1.500v3H12" /><path d="M2 2h5v5H2z" fill="currentColor" stroke="none" /></Svg></Tool>
        <Tool label="ネットワーク">
          <Svg w={15} h={15}>
            <circle cx="7" cy="7" r="6.300" />
            <ellipse cx="7" cy="7" rx="2.800" ry="6.300" />
            <path d="M1 4.500h12M1 9.500h8M7 .7v12.600" />
            <circle cx="11.500" cy="11.500" r="2.800" fill="#31314d" strokeWidth="1.200" />
            <path d="M9.700 9.700l3.600 3.600" />
          </Svg>
        </Tool>
        <Tool label="音量"><Svg w={13} h={11}><path d="M.6 3.500h2l3-3v10l-3-3h-2zM8 3.500l4 4M12 3.500l-4 4" strokeWidth="1.200" /></Svg></Tool>
        <Tool label="入力方式" className="text-[13px] font-bold">あ</Tool>
        <time className="ml-px flex flex-col items-center text-[10px] leading-4"><span>11:53</span><span>2020/04/21</span></time>
        <span className="h-[35px] w-[3px] border-l border-[#6a6a80]" />
      </div>
    </footer>
  );
}

export default function App() {
  return (
    <div className="flex h-screen flex-col overflow-hidden bg-[#e6e6e6] font-['Noto_Sans_CJK_JP',sans-serif] select-none">
      <header className="shrink-0 bg-[#217346] [font-feature-settings:'palt']">
        <TitleBar />
        <RibbonTabs />
      </header>
      <div className="contents [font-feature-settings:'palt']">
        <Ribbon />
      </div>
      <FormulaBar />
      <main className="flex min-h-0 flex-1">
        <Worksheet />
        <VerticalScroll />
      </main>
      <div className="contents [font-feature-settings:'palt']">
        <SheetTabs />
        <StatusBar />
      </div>
      <Taskbar />
    </div>
  );
}
